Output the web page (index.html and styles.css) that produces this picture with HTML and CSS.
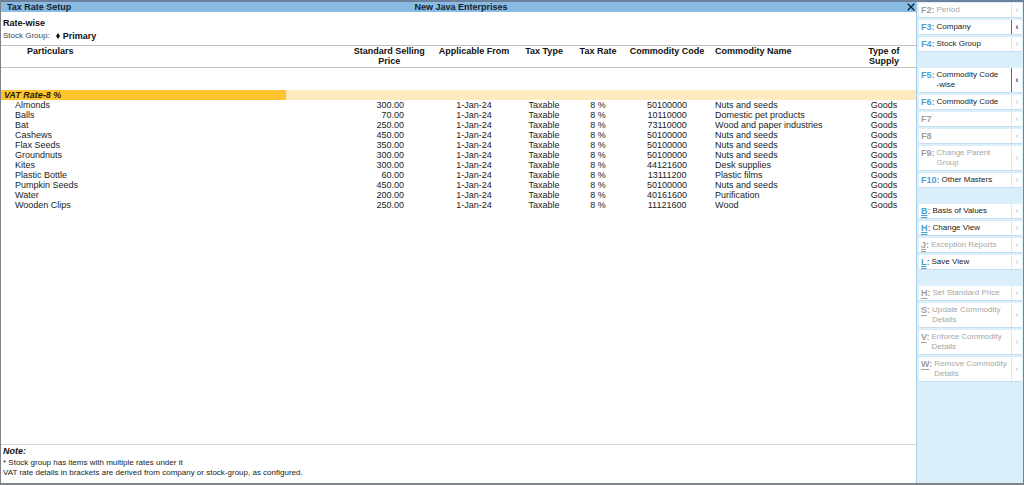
FILE: index.html
```
<!DOCTYPE html>
<html lang="en">
<head>
<meta charset="utf-8">
<title>Tax Rate Setup</title>
<link rel="stylesheet" href="styles.css">
</head>
<body>
<div class="window">
  <main class="report">
    <header class="titlebar">
      <h1 class="title">Tax Rate Setup</h1>
      <div class="company">New Java Enterprises</div>
      <button class="close" type="button" aria-label="Close"><svg viewBox="0 0 8 8" width="8" height="8"><path d="M0.7 0.7L7.3 7.3M7.3 0.7L0.7 7.3" fill="none" stroke="#10202c" stroke-width="1.3"/></svg></button>
    </header>
    <section class="scope">
      <h2 class="mode">Rate-wise</h2>
      <div class="group-line"><span class="label">Stock Group:</span><svg class="diamond" viewBox="0 0 4 6" width="4" height="6"><path d="M2 0L4 3L2 6L0 3Z" fill="#111"/></svg><b>Primary</b></div>
    </section>
    <table class="rates">
      <colgroup><col class="c-part"><col class="c-price"><col class="c-from"><col class="c-type"><col class="c-rate"><col class="c-code"><col class="c-name"><col class="c-supply"></colgroup>
      <thead>
        <tr><th class="part">Particulars</th><th class="price">Standard Selling<br>Price</th><th>Applicable From</th><th>Tax Type</th><th>Tax Rate</th><th>Commodity Code</th><th class="name">Commodity Name</th><th>Type of<br>Supply</th></tr>
      </thead>
      <tbody>
        <tr class="spacer"><td colspan="8"></td></tr>
        <tr class="band"><th class="band-name" scope="rowgroup">VAT Rate-8 %</th><td colspan="7"></td></tr>
        <tr><td class="part">Almonds</td><td class="price">300.00</td><td>1-Jan-24</td><td>Taxable</td><td>8 %</td><td>50100000</td><td class="name">Nuts and seeds</td><td>Goods</td></tr>
        <tr><td class="part">Balls</td><td class="price">70.00</td><td>1-Jan-24</td><td>Taxable</td><td>8 %</td><td>10110000</td><td class="name">Domestic pet products</td><td>Goods</td></tr>
        <tr><td class="part">Bat</td><td class="price">250.00</td><td>1-Jan-24</td><td>Taxable</td><td>8 %</td><td>73110000</td><td class="name">Wood and paper industries</td><td>Goods</td></tr>
        <tr><td class="part">Cashews</td><td class="price">450.00</td><td>1-Jan-24</td><td>Taxable</td><td>8 %</td><td>50100000</td><td class="name">Nuts and seeds</td><td>Goods</td></tr>
        <tr><td class="part">Flax Seeds</td><td class="price">350.00</td><td>1-Jan-24</td><td>Taxable</td><td>8 %</td><td>50100000</td><td class="name">Nuts and seeds</td><td>Goods</td></tr>
        <tr><td class="part">Groundnuts</td><td class="price">300.00</td><td>1-Jan-24</td><td>Taxable</td><td>8 %</td><td>50100000</td><td class="name">Nuts and seeds</td><td>Goods</td></tr>
        <tr><td class="part">Kites</td><td class="price">300.00</td><td>1-Jan-24</td><td>Taxable</td><td>8 %</td><td>44121600</td><td class="name">Desk supplies</td><td>Goods</td></tr>
        <tr><td class="part">Plastic Bottle</td><td class="price">60.00</td><td>1-Jan-24</td><td>Taxable</td><td>8 %</td><td>13111200</td><td class="name">Plastic films</td><td>Goods</td></tr>
        <tr><td class="part">Pumpkin Seeds</td><td class="price">450.00</td><td>1-Jan-24</td><td>Taxable</td><td>8 %</td><td>50100000</td><td class="name">Nuts and seeds</td><td>Goods</td></tr>
        <tr><td class="part">Water</td><td class="price">200.00</td><td>1-Jan-24</td><td>Taxable</td><td>8 %</td><td>40161600</td><td class="name">Purification</td><td>Goods</td></tr>
        <tr><td class="part">Wooden Clips</td><td class="price">250.00</td><td>1-Jan-24</td><td>Taxable</td><td>8 %</td><td>11121600</td><td class="name">Wood</td><td>Goods</td></tr>
      </tbody>
    </table>
    <footer class="notes">
      <h3 class="notes-title">Note:</h3>
      <p>* Stock group has items with multiple rates under it</p>
      <p>VAT rate details in brackets are derived from company or stock-group, as configured.</p>
    </footer>
  </main>
  <nav class="actions" aria-label="Actions">
    <div class="group">
      <button type="button" class="action" disabled><span class="key">F2:</span><span class="text">Period</span><span class="more">‹</span></button>
      <button type="button" class="action open"><span class="key">F3:</span><span class="text">Company</span><span class="more">‹</span></button>
      <button type="button" class="action"><span class="key">F4:</span><span class="text">Stock Group</span><span class="more">‹</span></button>
    </div>
    <div class="group">
      <button type="button" class="action open"><span class="key">F5:</span><span class="text">Commodity Code<br>-wise</span><span class="more">‹</span></button>
      <button type="button" class="action"><span class="key">F6:</span><span class="text">Commodity Code</span><span class="more">‹</span></button>
      <button type="button" class="action" disabled><span class="key">F7</span><span class="text"></span><span class="more">‹</span></button>
      <button type="button" class="action" disabled><span class="key">F8</span><span class="text"></span><span class="more">‹</span></button>
      <button type="button" class="action" disabled><span class="key">F9:</span><span class="text">Change Parent<br>Group</span><span class="more">‹</span></button>
      <button type="button" class="action"><span class="key">F10:</span><span class="text">Other Masters</span><span class="more">‹</span></button>
    </div>
    <div class="group">
      <button type="button" class="action"><span class="key"><span class="alt">B</span>:</span><span class="text">Basis of Values</span><span class="more">‹</span></button>
      <button type="button" class="action"><span class="key"><span class="alt">H</span>:</span><span class="text">Change View</span><span class="more">‹</span></button>
      <button type="button" class="action" disabled><span class="key"><span class="alt">J</span>:</span><span class="text">Exception Reports</span><span class="more">‹</span></button>
      <button type="button" class="action"><span class="key"><span class="alt">L</span>:</span><span class="text">Save View</span><span class="more">‹</span></button>
    </div>
    <div class="group">
      <button type="button" class="action" disabled><span class="key"><span class="ctrl">H</span>:</span><span class="text">Set Standard Price</span><span class="more">‹</span></button>
      <button type="button" class="action" disabled><span class="key"><span class="ctrl">S</span>:</span><span class="text">Update Commodity<br>Details</span><span class="more">‹</span></button>
      <button type="button" class="action" disabled><span class="key"><span class="ctrl">V</span>:</span><span class="text">Enforce Commodity<br>Details</span><span class="more">‹</span></button>
      <button type="button" class="action" disabled><span class="key"><span class="ctrl">W</span>:</span><span class="text">Remove Commodity<br>Details</span><span class="more">‹</span></button>
    </div>
  </nav>
</div>
</body>
</html>
```
FILE: styles.css
```
* { box-sizing: border-box; }
body {
  margin: 0;
  font: 9px/10px "Liberation Sans", Arial, sans-serif;
  color: #222;
}
h1, h2, h3, p { margin: 0; font-size: inherit; }
button { font: inherit; color: inherit; border: 0; padding: 0; margin: 0; background: none; }

.window {
  display: flex;
  min-height: 100vh;
  background: #fff;
  border: 1px solid #7f8289;
  border-top: 2px solid #6c809c;
  border-bottom: 2px solid #7f8289;
}
.report { flex: 1; display: flex; flex-direction: column; min-width: 0; }

.titlebar {
  display: grid;
  grid-template-columns: 1fr auto 1fr;
  align-items: center;
  height: 10px;
  padding: 0 1px 0 6px;
  background: #8abbe2;
  color: #12222e;
  font-weight: bold;
}
.close { justify-self: end; display: flex; }

.scope { padding: 6px 2px 4px; display: grid; gap: 3px; color: #111; }
.group-line { display: flex; align-items: center; }
.label { color: #444; font-size: 8px; }
.diamond { margin: 0 3px 0 6px; }

.rates { width: 100%; table-layout: fixed; border-collapse: collapse; text-align: center; }
.rates th, .rates td { padding: 0; vertical-align: top; white-space: nowrap; }
.rates thead { border-top: 1px solid #bfc1c3; border-bottom: 1px solid #bfc1c3; color: #111; }
.rates thead th { padding-bottom: 1px; }
.c-part { width: 31.2%; }
.c-price { width: 15.9%; }
.c-from { width: 9.2%; }
.c-type { width: 6.1%; }
.c-rate { width: 5.7%; }
.c-code { width: 9.4%; }
.c-name { width: 15.5%; }
.c-supply { width: 7%; }
.rates th.part { text-align: left; padding-left: 26px; }
.rates th.price { padding-left: 60px; }
.rates td.part { text-align: left; padding-left: 14px; }
.rates td.price { text-align: right; padding-right: 28px; }
.rates .name { text-align: left; padding-left: 5px; }
.spacer { height: 22px; }
.band { background: #fdeabf; }
.rates .band-name {
  background: #fdc42f;
  color: #2b1c00;
  text-align: left;
  font-style: italic;
  padding-left: 3px;
}

.notes { margin-top: auto; padding: 1px 2px 5px; border-top: 1px solid #d5d7d9; font-size: 8px; }
.notes-title { color: #111; font-size: 9px; font-style: italic; margin-bottom: 2px; }

.actions {
  width: 107px;
  padding: 1px 1px 0 2px;
  background: #dbeffb;
  border-left: 1px solid #a9cde6;
  display: flex;
  flex-direction: column;
  gap: 16px;
}
.group { display: flex; flex-direction: column; gap: 2px; }
.action {
  display: flex;
  padding-left: 2px;
  background: #fff;
  border-bottom: 1px solid #c5dff0;
  text-align: left;
  white-space: nowrap;
}
.key { padding: 2px 2px 2px 0; font-weight: bold; color: #4ba0d2; }
.text { flex: 1; min-width: 0; padding: 2px 0; font-size: 8px; }
.more {
  align-self: stretch;
  width: 11px;
  display: flex;
  align-items: center;
  justify-content: center;
  border-left: 1px solid #e0e7ec;
  color: #b5bdc3;
}
.open .more { border-left-color: #4a6ea9; color: #1f3f86; font-weight: bold; }
.action:disabled { color: #a6a6a6; }
.action:disabled .key { color: #a0a0a0; }
.alt, .ctrl { text-decoration: underline; text-decoration-thickness: 1px; text-underline-offset: 2px; }
.alt { text-decoration-style: double; text-underline-offset: 1px; }
```
